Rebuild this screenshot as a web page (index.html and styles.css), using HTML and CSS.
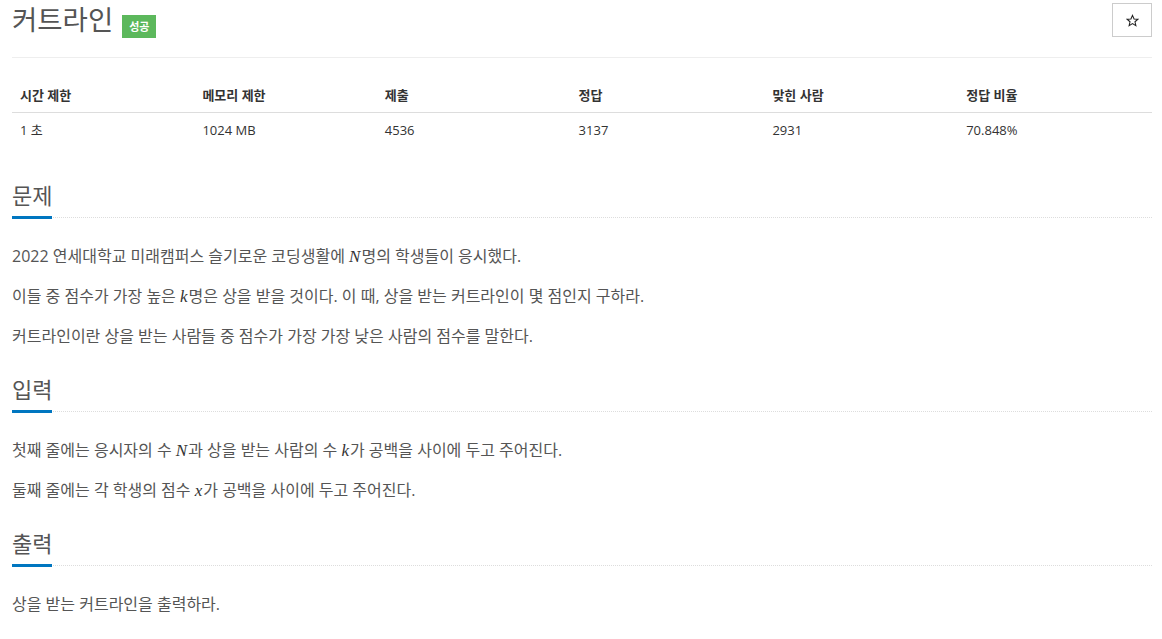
FILE: index.html
```html
<!DOCTYPE html>
<html lang="ko">
  <head>
    <title>커트라인</title>
    <meta charset="UTF-8" />
    <meta name="viewport" content="width=device-width" />
    <link rel="stylesheet" href="styles.css">
  </head>
  <body>
    <main class="page">
      <div class="page-header">
        <h1 class="title">
          <span class="title-text">커트라인</span>
          <span class="badge">성공</span>
        </h1>
        <button class="star-btn" type="button" aria-label="즐겨찾기">
          <svg width="13" height="13" viewBox="0 0 24 24">
            <path d="M12 2.5l2.9 6.6 7.1.6-5.4 4.7 1.6 7-6.2-3.7-6.2 3.7 1.6-7L2 9.7l7.1-.6z" fill="none" stroke="#222" stroke-width="2" stroke-linejoin="miter" />
          </svg>
        </button>
      </div>

      <table class="info-table">
        <thead>
          <tr>
            <th style="width: 16%">시간 제한</th>
            <th style="width: 16%">메모리 제한</th>
            <th style="width: 17%">제출</th>
            <th style="width: 17%">정답</th>
            <th style="width: 17%">맞힌 사람</th>
            <th style="width: 17%">정답 비율</th>
          </tr>
        </thead>
        <tbody>
          <tr>
            <td>1 초</td>
            <td>1024 MB</td>
            <td>4536</td>
            <td>3137</td>
            <td>2931</td>
            <td>70.848%</td>
          </tr>
        </tbody>
      </table>

      <section class="problem-section">
        <h2 class="headline"><span>문제</span></h2>
        <p>2022 연세대학교 미래캠퍼스 슬기로운 코딩생활에 <span class="math">N</span>명의 학생들이 응시했다.</p>
        <p>이들 중 점수가 가장 높은 <span class="math">k</span>명은 상을 받을 것이다. 이 때, 상을 받는 커트라인이 몇 점인지 구하라.</p>
        <p>커트라인이란 상을 받는 사람들 중 점수가 가장 가장 낮은 사람의 점수를 말한다.</p>
      </section>

      <section class="problem-section">
        <h2 class="headline"><span>입력</span></h2>
        <p>첫째 줄에는 응시자의 수 <span class="math">N</span>과 상을 받는 사람의 수 <span class="math">k</span>가 공백을 사이에 두고 주어진다.</p>
        <p>둘째 줄에는 각 학생의 점수 <span class="math">x</span>가 공백을 사이에 두고 주어진다.</p>
      </section>

      <section class="problem-section">
        <h2 class="headline"><span>출력</span></h2>
        <p>상을 받는 커트라인을 출력하라.</p>
      </section>
    </main>
  </body>
</html>
```

FILE: styles.css
```css
* {
  box-sizing: border-box;
}

body {
  margin: 0;
  font-family: "Open Sans", "Noto Sans CJK KR", sans-serif;
  color: #333;
  background-color: white;
}

.page {
  padding: 0 10px 0 12px;
}

/* Header */

.page-header {
  display: flex;
  justify-content: space-between;
  align-items: flex-start;
  height: 58px;
  border-bottom: 1px solid #eee;
}

.title {
  display: flex;
  align-items: flex-start;
  gap: 9px;
  margin: 0;
  font-weight: normal;
}

.title-text {
  font-size: 27.5px;
  line-height: 40px;
  color: #555;
}

.badge {
  margin-top: 15px;
  padding: 0 7px;
  font-size: 11px;
  font-weight: bold;
  line-height: 23px;
  color: white;
  background-color: #5cb85c;
}

.star-btn {
  display: flex;
  align-items: center;
  justify-content: center;
  margin-top: 3px;
  width: 40px;
  height: 34px;
  padding: 0;
  border: 1px solid #ccc;
  background-color: white;
}

/* Info table */

.info-table {
  width: 100%;
  margin: 20px 0 33px;
  border-collapse: collapse;
  table-layout: fixed;
  font-size: 13px;
  line-height: 18.5px;
  color: #333;
}

.info-table th {
  padding: 8px 8px 7px;
  text-align: left;
  font-weight: bold;
  border-bottom: 1px solid #ddd;
}

.info-table td {
  padding: 8px;
}

/* Sections */

.headline {
  display: flex;
  margin: 23px 0 23px;
  font-size: 22px;
  font-weight: normal;
  line-height: 30px;
  color: #555;
  border-bottom: 1px dotted #ddd;
}

.headline span {
  padding-bottom: 6px;
  margin-bottom: -2px;
  border-bottom: 3px solid #0076c0;
}

.problem-section p {
  margin: 0 0 10px;
  font-size: 16px;
  line-height: 30px;
  color: #555;
}

.math {
  font-family: "Liberation Serif", "DejaVu Serif", serif;
  font-size: 17px;
  font-style: italic;
  line-height: 1;
  color: #333;
  padding-right: 1px;
}
```
